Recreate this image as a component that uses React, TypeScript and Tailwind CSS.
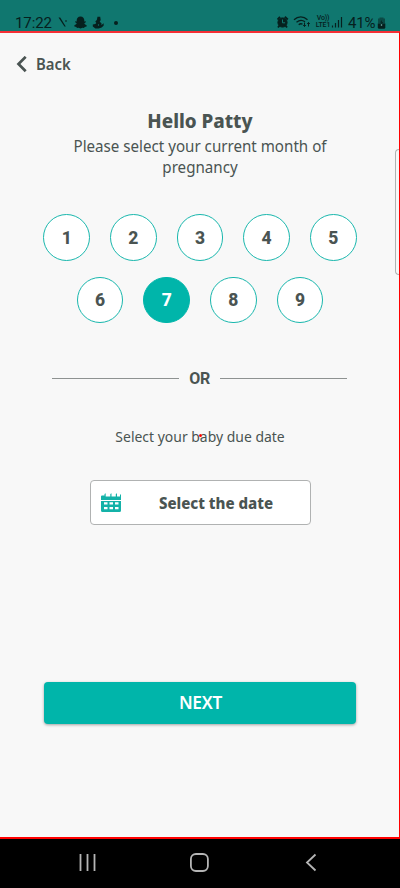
import React from "react";

const sans = "font-['Noto_Sans','Open_Sans',sans-serif]";
const roboto = "font-['Roboto',sans-serif]";

function StatusBar() {
  return (
    <header className={`flex h-[31px] shrink-0 items-end bg-[#10776f] text-[#06201e] ${roboto}`}>
      <span className="ml-[15px] w-[37px] whitespace-nowrap text-[15px] leading-[16px] tracking-[-0.1px]">17:22</span>
      <svg className="ml-[6px] h-[15px] w-[64px] shrink-0" viewBox="0 0 64 15" fill="currentColor">
        <path d="M0.500 1.500h1.700l5.600 9h-1.400zM7 4.500h2v1H7z" />
        <path d="M22.500 0.500c2.500 0 3.800 1.700 3.800 4v1l1.500-.2v1l-1.500 1c.4 1.200 1.200 1.500 2.300 1.900v1.200l-2 .5-.5 1-1.700-.1-1.900 .7-1.900-.7-1.700.1-.5-1-2-.5v-1.200c1.100-.4 1.900-.7 2.300-1.900l-1.500-1v-1l1.500.2v-1c0-2.300 1.300-4 3.800-4z" />
        <path d="M39.500 .8h2.700l.5 3.200-1 1.700 1.800 1.500-.2 1.700 2.500-1.700-.2 2.500-2 1.800-3 .9h-3.200l-2.600-1.800v-2.200l2.500-.5 1-1-1-1.500 1.500-1.500z" />
        <circle cx="40.500" cy="9" r=".7" fill="#10776f" />
        <circle cx="58" cy="6.900" r="2" />
      </svg>
      <svg className="ml-auto h-[17px] w-[38px] shrink-0" viewBox="0 0 38 17" fill="none" stroke="currentColor">
        <circle cx="5.500" cy="8.500" r="4.600" fill="currentColor" />
        <path d="M.5 5.500 3 2.800M7.800 2.800l3 2.700M2.500 11.500 1 13.500M8.500 11.500l1.500 2" strokeWidth="1.900" />
        <path d="M5.500 5.500v3.300h2.600" stroke="#10776f" strokeWidth="1" />
        <path d="M17 5.800c4-4 9.500-4 13.500 0M19.500 8.300c2.800-2.400 6-2.400 8.500-.5M21.700 10.800c1.500-1.300 2.700-1.300 3.800-.5" strokeWidth="1.300" />
        <path d="M27.500 8.500v4M26.200 11l1.300 1.500 1.300-1.500M31.500 12.500v-4M30.200 10l1.300-1.500 1.300 1.500" strokeWidth="1" />
      </svg>
      <div className="mb-[2px] flex w-[16px] shrink-0 flex-col items-center text-[7px] leading-[7px] font-medium tracking-[-0.200px]">
        <span>Vo))</span>
        <span>LTE1</span>
      </div>
      <svg className="h-[17px] w-[17px] shrink-0" viewBox="0 0 17 17" fill="none" stroke="currentColor">
        <path d="M1.500 11.500v2M4.500 9v4.500M7.500 6v7.500M10.500 3v10.500" strokeWidth="1.200" />
      </svg>
      <span className="w-[29px] whitespace-nowrap text-[15px] leading-[16px] tracking-[-0.200px]">41%</span>
      <svg className="mr-[14px] mb-[2px] h-[12px] w-[9px] shrink-0" viewBox="0 0 9 12">
        <path d="M2.500 .5h4v1H8v5H1v-5h1.500z" fill="#0a4a45" />
        <path d="M.8 6.500h7.500v3.700q0 1.500-1.500 1.500H2.300q-1.500 0-1.500-1.500z" fill="#06201e" />
        <path d="M4.500 3 3.300 5.500h1.200v2L6 5H4.800z" fill="#06201e" />
        <circle cx="4.500" cy="8" r=".8" fill="#7fc0b9" />
      </svg>
    </header>
  );
}

function Month({ value }: { value: number }) {
  const active = value === 7;
  return (
    <button
      className={`flex size-[46.66px] items-center justify-center rounded-full border pt-px text-[17.500px] font-extrabold ${roboto} ${
        active ? "border-[#00b5aa] bg-[#00b5aa] text-white" : "border-[#19b7ad] bg-white text-[#4a5452]"
      }`}
    >
      {value}
    </button>
  );
}

function CalendarIcon() {
  return (
    <svg className="h-[20px] w-[21px] shrink-0" viewBox="0 0 21 20" fill="#14b2a8">
      <path d="M0 7V3.500q0-1 1-1h2.500V1L4.700.3v3.200h4.600V1l1.200-.7v3.200h4.300V1L16 .3v3.200h3V1.200l1 .5v5.300zM0 8h20v9.500q0 1.500-1.500 1.500h-17Q0 19 0 17.500z" />
      <path d="M3 9.300h3.500v2.200H3zM8.500 9.300H12v2.200H8.500zM14 9.300h3.500v2.200H14zM3 14h3.500v2.200H3zM8.500 14H12v2.200H8.500zM14 14h3.500v2.200H14z" fill="white" />
    </svg>
  );
}

export default function App() {
  return (
    <div className={`relative flex h-[888px] w-[400px] flex-col overflow-hidden bg-[#f8f8f8] text-[#4a5452] ${sans}`}>
      <StatusBar />
      <main className="flex h-[808px] shrink-0 flex-col items-center border-y-2 border-r border-t-[#f52f35] border-r-[#f00] border-b-[#f00]">
        <button className="mt-[20px] ml-[16px] flex h-[22px] items-center self-start text-[16px] font-semibold">
          <svg className="h-[17px] w-[12px]" viewBox="0 0 12 17" fill="none" stroke="currentColor" strokeWidth="2.700">
            <path d="M9.700 .8 2.500 8l7.200 7.200" />
          </svg>
          <span className="ml-[8px] origin-left scale-x-[0.93]">Back</span>
        </button>
        <h1 className="mt-[33px] ml-px h-[28px] scale-x-[0.94] text-[20px] leading-[26px] font-extrabold">Hello Patty</h1>
        <p className="ml-px w-[290px] scale-x-[0.946] text-center text-[16px] leading-[21px]">
          Please select your current month of pregnancy
        </p>
        <div className="mt-[36px] ml-px flex w-[320px] flex-wrap justify-center gap-x-[20px] gap-y-[16px]">
          {[1, 2, 3, 4, 5, 6, 7, 8, 9].map((n) => (
            <Month key={n} value={n} />
          ))}
        </div>
        <div className="mt-[44px] flex h-[22px] w-[295px] items-center justify-between">
          <div className="h-px w-[127px] bg-[#8e9291]" />
          <span className={`pt-px text-[16px] font-bold tracking-[-0.500px] ${roboto}`}>OR</span>
          <div className="h-px w-[127px] bg-[#8e9291]" />
        </div>
        <p className="relative mt-[37px] mb-px ml-px h-[20px] scale-x-[0.93] text-[15px] leading-[20px] whitespace-nowrap">
          Select your baby due date
          <span className="absolute top-[8px] left-[90px] h-[3px] w-[3px] rounded-full bg-[#f00]" />
        </p>
        <button className="mt-[33px] ml-px flex h-[45px] w-[221px] items-center rounded-[4px] border border-[#b0b2b2] bg-white pl-[10px]">
          <CalendarIcon />
          <span className="w-[188px] scale-x-[0.94] text-center text-[16px] font-extrabold">Select the date</span>
        </button>
        <button className="mt-[156.500px] ml-px h-[42px] w-[312px] rounded-[4px] bg-[#00b5aa] text-[18px] font-semibold text-white shadow-[0_1px_3px_rgba(0,0,0,0.35)]">
          <span className="inline-block scale-x-[0.96] tracking-[-0.300px]">NEXT</span>
        </button>
      </main>
      <nav className="flex h-[49px] items-center bg-black">
        <svg className="h-[49px] w-[400px]" viewBox="0 0 400 49" fill="none" stroke="#b5b5b5" strokeWidth="1.800">
          <path d="M80.500 15v17M87.500 15v17M94.500 15v17M315.500 15.500 307 23.500l8.500 8" />
          <rect x="190.900" y="15" width="17" height="17" rx="5" />
        </svg>
      </nav>
      <div className="absolute top-[149px] right-px h-[126px] w-[4px] rounded-l-[4px] border border-r-0 border-[#b0b2b2] bg-[#f8f8f8]" />
    </div>
  );
}
